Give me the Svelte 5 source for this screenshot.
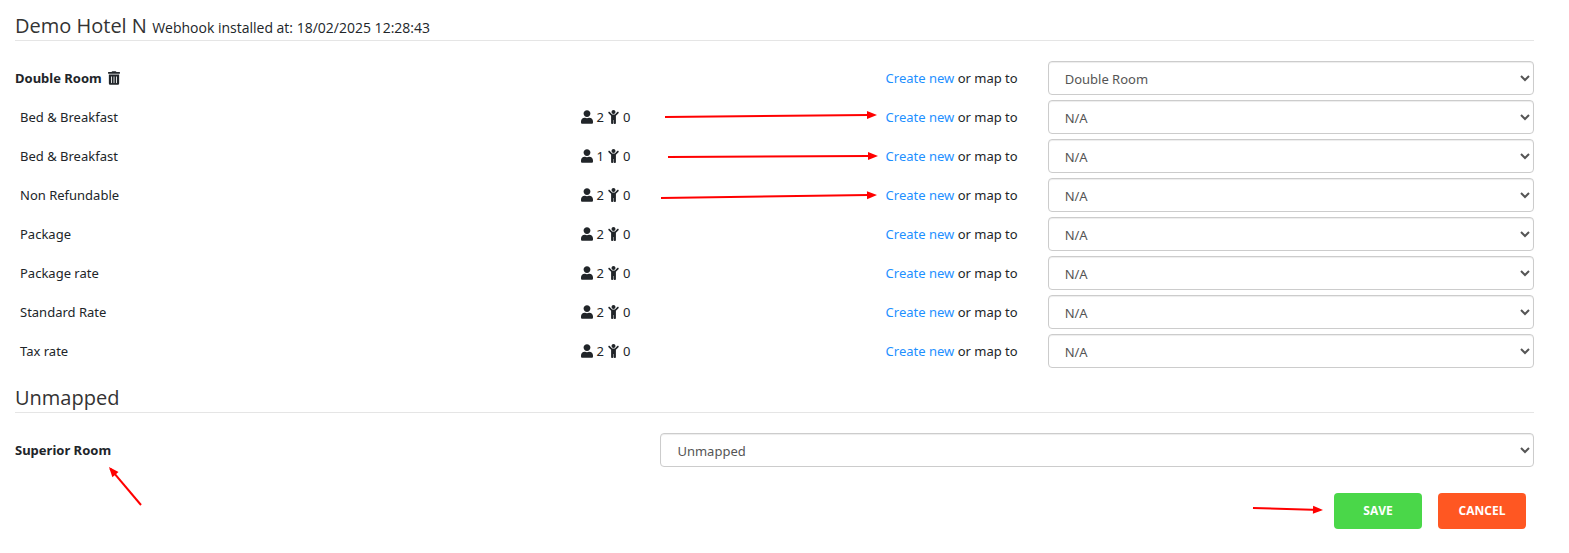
<script lang="ts">
  type Arrow = {
    x1: number
    y1: number
    x2: number
    y2: number
  }

  type Rate = {
    name: string
    adults: number
    children: number
    target: string
    arrow?: Arrow
  }

  const hotel = "Demo Hotel N"
  const installedAt = "18/02/2025 12:28:43"

  let room = $state({ name: "Double Room", target: "Double Room" })

  let rates: Rate[] = $state([
    { name: "Bed & Breakfast", adults: 2, children: 0, target: "N/A", arrow: { x1: 5, y1: 17, x2: 217, y2: 15 } },
    { name: "Bed & Breakfast", adults: 1, children: 0, target: "N/A", arrow: { x1: 8, y1: 18, x2: 218, y2: 17 } },
    { name: "Non Refundable", adults: 2, children: 0, target: "N/A", arrow: { x1: 1, y1: 20, x2: 217, y2: 17 } },
    { name: "Package", adults: 2, children: 0, target: "N/A" },
    { name: "Package rate", adults: 2, children: 0, target: "N/A" },
    { name: "Standard Rate", adults: 2, children: 0, target: "N/A" },
    { name: "Tax rate", adults: 2, children: 0, target: "N/A" },
  ])

  let unmapped = $state([{ name: "Superior Room", target: "Unmapped" }])

  // triangle at the end of the line, pointing along it
  function headPoints({ x1, y1, x2, y2 }: Arrow): string {
    const length = Math.hypot(x2 - x1, y2 - y1)
    const dx = (x2 - x1) / length
    const dy = (y2 - y1) / length
    const bx = x2 - dx * 10
    const by = y2 - dy * 10
    return `${x2},${y2} ${bx - dy * 4},${by + dx * 4} ${bx + dy * 4},${by - dx * 4}`
  }
</script>

{#snippet arrowLine(a: Arrow)}
  <line x1={a.x1} y1={a.y1} x2={a.x2 - (a.x2 - a.x1) * 0.04} y2={a.y2 - (a.y2 - a.y1) * 0.04} />
  <polygon points={headPoints(a)} />
{/snippet}

{#snippet createOrMap()}
  <a href="#create">Create new</a> or map to
{/snippet}

<main>
  <h2>{hotel} <small>Webhook installed at: {installedAt}</small></h2>

  <div class="row">
    <div class="cell room">
      <label for="room">{room.name}</label>
      <button class="delete" type="button" aria-label="Delete mapping">
        <svg class="icon" viewBox="0 0 448 512" width="12" height="14">
          <path d="M32 464a48 48 0 0 0 48 48h288a48 48 0 0 0 48-48V128H32zm272-256a16 16 0 0 1 32 0v224a16 16 0 0 1-32 0zm-96 0a16 16 0 0 1 32 0v224a16 16 0 0 1-32 0zm-96 0a16 16 0 0 1 32 0v224a16 16 0 0 1-32 0zM432 32H312l-9.4-18.7A24 24 0 0 0 281.1 0H166.8a23.72 23.72 0 0 0-21.4 13.3L136 32H16A16 16 0 0 0 0 48v32a16 16 0 0 0 16 16h416a16 16 0 0 0 16-16V48a16 16 0 0 0-16-16z" />
        </svg>
      </button>
    </div>
    <div class="cell action">{@render createOrMap()}</div>
    <div class="cell">
      <select id="room" bind:value={room.target}>
        <option>N/A</option>
        <option>Double Room</option>
      </select>
    </div>
  </div>

  {#each rates as rate, i}
    <div class="row">
      <div class="cell rate">
        <label for="rate-{i}">{rate.name}</label>
        <span class="guests">
          <svg class="icon" viewBox="0 0 448 512" width="12" height="14">
            <path d="M224 256c70.700 0 128-57.300 128-128S294.700 0 224 0 96 57.300 96 128s57.300 128 128 128zm89.600 32h-16.700c-22.200 10.200-46.900 16-72.900 16s-50.600-5.800-72.900-16h-16.700C60.200 288 0 348.200 0 422.400V464c0 26.500 21.500 48 48 48h352c26.500 0 48-21.500 48-48v-41.600c0-74.200-60.200-134.400-134.400-134.400z" />
          </svg>
          <span>{rate.adults}</span>
          <svg class="icon" viewBox="0 0 384 512" width="11" height="14">
            <path d="M120 72c0-39.765 32.235-72 72-72s72 32.235 72 72c0 39.764-32.235 72-72 72s-72-32.236-72-72zm254.627 1.373c-12.496-12.497-32.758-12.497-45.254 0L242.745 160H141.254L54.627 73.373c-12.496-12.497-32.758-12.497-45.254 0-12.497 12.497-12.497 32.758 0 45.255L104 213.254V480c0 17.673 14.327 32 32 32h16c17.673 0 32-14.327 32-32V368h16v112c0 17.673 14.327 32 32 32h16c17.673 0 32-14.327 32-32V213.254l94.627-94.627c12.497-12.497 12.497-32.757 0-45.254z" />
          </svg>
          <span>{rate.children}</span>
        </span>
      </div>
      <div class="cell action">
        {#if rate.arrow}
          <svg class="arrow to-link" width="220" height="34" aria-hidden="true">{@render arrowLine(rate.arrow)}</svg>
        {/if}
        {@render createOrMap()}
      </div>
      <div class="cell">
        <select id="rate-{i}" bind:value={rate.target}>
          <option>N/A</option>
          <option>Standard Rate</option>
        </select>
      </div>
    </div>
  {/each}

  <h2 class="next">Unmapped</h2>

  {#each unmapped as item, i}
    <div class="row wide">
      <div class="cell room">
        <label for="unmapped-{i}">{item.name}</label>
        <svg class="arrow to-room" width="40" height="44" aria-hidden="true">
          {@render arrowLine({ x1: 36, y1: 41, x2: 4, y2: 3 })}
        </svg>
      </div>
      <div class="cell">
        <select id="unmapped-{i}" bind:value={item.target}>
          <option>Unmapped</option>
          <option>Superior Room</option>
        </select>
      </div>
    </div>
  {/each}

  <footer>
    <svg width="72" height="20" aria-hidden="true">{@render arrowLine({ x1: 1, y1: 7, x2: 71, y2: 9 })}</svg>
    <button class="btn save" type="button">Save</button>
    <button class="btn cancel" type="button">Cancel</button>
  </footer>
</main>

<style>
  :global(body) {
    margin: 0;
    background: #fff;
  }

  main {
    margin-right: 20px;
    padding-top: 12px;
    font-family: "Segoe UI", "Noto Sans", sans-serif;
    font-size: 13px;
    line-height: 20px;
    color: #212529;
  }

  h2 {
    margin: 0 15px 20px;
    border-bottom: 1px solid #e5e5e5;
    font-family: "Segoe UI", "Open Sans", sans-serif;
    font-size: 20px;
    line-height: 28px;
    font-weight: 400;
    color: #333;
  }

  h2.next {
    margin-top: 16px;
  }

  h2 small {
    font-size: 14px;
    line-height: 20px;
    color: #212529;
  }

  .row {
    display: grid;
    grid-template-columns: minmax(0, 5fr) minmax(0, 3fr) minmax(0, 4fr);
    align-items: center;
    margin-bottom: 5px;
  }

  .row.wide {
    grid-template-columns: minmax(0, 5fr) minmax(0, 7fr);
  }

  .cell {
    position: relative;
    padding: 0 15px;
  }

  .room {
    display: flex;
    align-items: center;
    gap: 6px;
    font-weight: 700;
  }

  .rate {
    display: flex;
    justify-content: space-between;
    padding-left: 20px;
  }

  .guests {
    display: flex;
    align-items: center;
    gap: 4px;
  }

  .action {
    text-align: right;
  }

  .icon {
    display: block;
    fill: currentColor;
  }

  .delete {
    padding: 0;
    border: none;
    background: none;
    color: inherit;
    cursor: pointer;
  }

  a {
    color: #1e90ff;
    text-decoration: none;
  }

  select {
    display: block;
    box-sizing: border-box;
    width: 100%;
    height: 34px;
    padding: 7px 12px 5px;
    border: 1px solid #ccc;
    border-radius: 4px;
    background: #fff;
    box-shadow: inset 0 1px 1px rgba(0, 0, 0, 0.075);
    font: inherit;
    color: #555;
  }

  line {
    stroke: #f00;
    stroke-width: 2;
  }

  polygon {
    fill: #f00;
  }

  .arrow {
    position: absolute;
    pointer-events: none;
  }

  .to-link {
    right: 153px;
    top: -7px;
  }

  .to-room {
    left: 105px;
    top: 24px;
  }

  footer {
    display: flex;
    justify-content: flex-end;
    align-items: center;
    gap: 16px;
    padding: 21px 23px 24px;
  }

  footer svg {
    margin-right: -6px;
  }

  .btn {
    width: 88px;
    height: 36px;
    padding: 0;
    border: none;
    border-radius: 4px;
    font: inherit;
    font-family: "Segoe UI", "Open Sans", sans-serif;
    font-size: 12px;
    font-weight: 700;
    text-transform: uppercase;
    color: #fff;
    cursor: pointer;
  }

  .save {
    background: #4ad749;
  }

  .cancel {
    background: #ff5722;
  }
</style>
